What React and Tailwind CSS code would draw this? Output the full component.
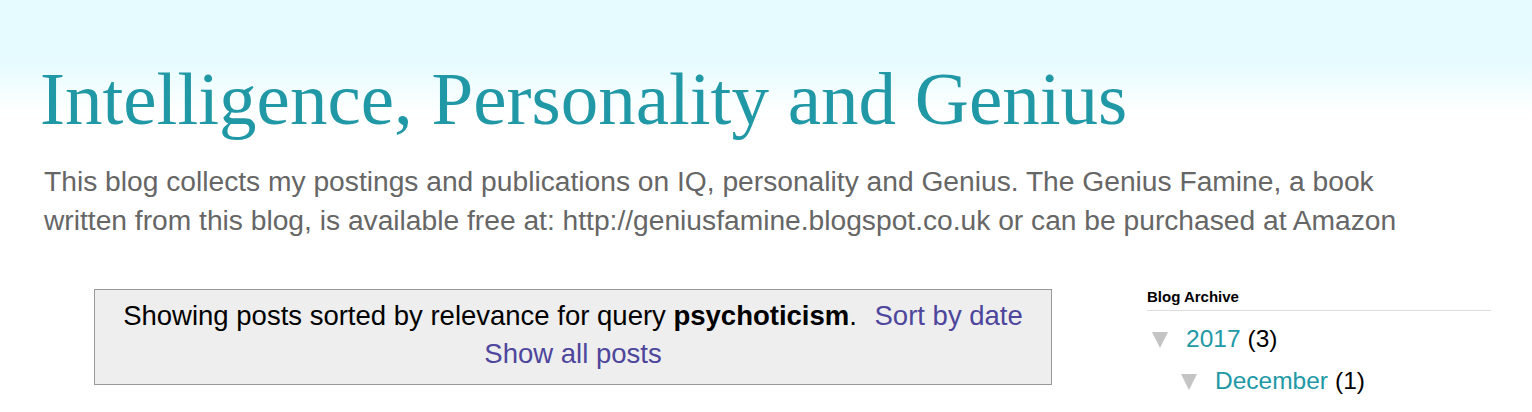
import { useState } from 'react';

// Grey disclosure triangle used by the archive tree
function Toggle() {
  return (
    <svg width="18" height="18" viewBox="0 0 18 18" className="shrink-0">
      <polygon points="1,2 17,2 9,18" fill="#c4c4c4" />
    </svg>
  );
}

function ArchiveRow({ label, count, indent }) {
  return (
    <div className={`flex items-center h-[42px] ${indent ? 'pl-[33px]' : 'pl-[4px]'}`}>
      <Toggle />
      <a href="#" className="ml-[17px] text-[#2198a6] hover:underline">{label}</a>
      <span className="ml-[7px] text-black">({count})</span>
    </div>
  );
}

export default function App() {
  // query shown in the status box
  const [query] = useState('psychoticism');

  return (
    <div className="min-h-[412px] bg-gradient-to-b from-[#e6fbff] from-[15%] to-white to-[28%] font-['Liberation_Sans',Arial,sans-serif]">
      {/* Header */}
      <header className="pl-[40px] pt-[61px]">
        <h1 className="font-['Liberation_Serif','Times_New_Roman',serif] text-[75px] leading-[75px] text-[#2198a6]">
          Intelligence, Personality and Genius
        </h1>
        <p className="mt-[26px] pl-[4px] text-[28.2px] leading-[39px] text-[#666666]">
          This blog collects my postings and publications on IQ, personality and Genius. The Genius Famine, a book
          <br />
          written from this blog, is available free at: http://geniusfamine.blogspot.co.uk or can be purchased at Amazon
        </p>
      </header>

      {/* Content */}
      <div className="flex mt-[49px]">
        <main className="pl-[94px] w-[1052px] shrink-0">
          <div className="border border-[#999999] bg-[#eeeeee] pt-[7px] pb-[11px] text-center text-[27.5px] leading-[38px] text-black">
            <div>
              Showing posts sorted by relevance for query <b>{query}</b>.{' '}
              <a href="#" className="ml-[10px] text-[#4d469c]">Sort by date</a>
            </div>
            <a href="#" className="text-[#4d469c]">Show all posts</a>
          </div>
        </main>

        <aside className="ml-[95px] w-[344px]">
          <h2 className="text-[15px] font-bold leading-[14px] text-black pt-[1px]">Blog Archive</h2>
          <div className="mt-[6px] border-t border-[#dddddd]" />
          <div className="pt-[7px] text-[24.5px]">
            <ArchiveRow label="2017" count={3} />
            <ArchiveRow label="December" count={1} indent />
          </div>
        </aside>
      </div>
    </div>
  );
}
